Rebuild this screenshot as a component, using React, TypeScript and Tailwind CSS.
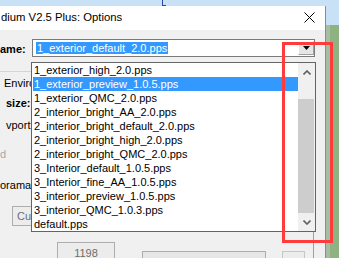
const files = [
  '1_exterior_high_2.0.pps',
  '1_exterior_preview_1.0.5.pps',
  '1_exterior_QMC_2.0.pps',
  '2_interior_bright_AA_2.0.pps',
  '2_interior_bright_default_2.0.pps',
  '2_interior_bright_high_2.0.pps',
  '2_interior_bright_QMC_2.0.pps',
  '3_Interior_default_1.0.5.pps',
  '3_Interior_fine_AA_1.0.5.pps',
  '3_interior_preview_1.0.5.pps',
  '3_interior_QMC_1.0.3.pps',
  'default.pps',
]

function Chevron({ up }: { up?: boolean }) {
  return (
    <svg width="8" height="5" viewBox="0 0 8 5">
      <polyline
        points={up ? '0.5,4.5 4,1 7.5,4.5' : '0.5,0.5 4,4 7.5,0.5'}
        fill="none"
        stroke="#606060"
        strokeWidth="1.6"
      />
    </svg>
  )
}

export default function App() {
  return (
    <div className="relative w-[339px] h-[258px] overflow-hidden flex bg-[#8fb282] font-['Liberation_Sans',Arial,sans-serif] text-[11px] text-black">
      {/* dialog column */}
      <div className="w-[326px] flex flex-col">
        <div className="h-[7px] bg-[#c9e1f6] flex">
          <div className="ml-[162px] w-[4px] h-[6px] border-l border-b border-[#2a49a8]" />
        </div>
        <div className="flex-1 flex flex-col border-r border-[#6f8fc0]">
          {/* title bar */}
          <div className="h-[24px] bg-white flex items-center">
            <span className="pl-[1px] text-[11.3px] leading-[14px] mt-[-2px]">dium V2.5 Plus: Options</span>
            <svg className="ml-auto mr-[10px] mt-[-2px]" width="11" height="11" viewBox="0 0 11 11">
              <path d="M0.5 0.5 L10.5 10.5 M10.5 0.5 L0.5 10.5" stroke="#000" strokeWidth="1" />
            </svg>
          </div>

          {/* body */}
          <div className="flex-1 bg-[#f0f0f0] flex flex-col">
            <div className="mt-[9px] flex items-center h-[18px]">
              <span className="w-[32px] font-bold leading-[14px] mt-[2px]">ame:</span>
              <div className="w-[283px] h-[18px] border border-[#7a7a7a] bg-white flex items-start">
                <span className="ml-[3px] mt-[2px] h-[12px] px-[1px] bg-[#3399ff] text-white leading-[12px]">
                  1_exterior_default_2.0.pps
                </span>
                <div className="ml-auto mt-[1px] w-[16px] h-[14px] bg-[#e5e5e5] border-t border-l border-white border-b border-r border-b-[#a0a0a0] border-r-[#a0a0a0] flex items-center justify-center">
                  <svg width="7" height="4" viewBox="0 0 7 4">
                    <polygon points="0,0 7,0 3.5,4" fill="#000" />
                  </svg>
                </div>
              </div>
            </div>

            <div className="mt-[14px] w-[40px] h-px bg-[#d5d5d5]" />
            <div className="mt-[4px] pl-[4px] leading-[14px]">Enviro</div>
            <div className="mt-[6px] pl-[6px] leading-[14px] font-bold">size:</div>
            <div className="mt-[8px] pl-[6px] leading-[14px]">vport</div>
            <div className="mt-[15px] pl-[0px] leading-[14px] text-[#a8a8a8]">d</div>
            <div className="mt-[17px] leading-[14px]">orama</div>
            <div className="mt-[14px] ml-[12px] w-[60px] h-[20px] border border-[#adadad] bg-[#ececec] flex items-center pl-[4px] text-[#6d6d6d]">
              Cu
            </div>
            <div className="mt-[16px] flex items-start">
              <div className="ml-[57px] w-[58px] h-[21px] border border-[#adadad] bg-[#ececec] flex items-center justify-center text-[#6d6d6d] pt-[1px]">
                1198
              </div>
              <div className="ml-[27px] mt-[9px] w-[124px] h-[12px] border border-[#adadad] bg-[#e6e6e6]" />
              <div className="ml-[16px] mt-[9px] w-[23px] h-[12px] border border-[#c6c6c6] bg-[#ececec]" />
              <div className="ml-[8px] -mt-[11px] w-px h-[30px] bg-[#a0a0a0]" />
            </div>
          </div>
        </div>
      </div>

      {/* desktop strip on the right */}
      <div className="flex-1 flex flex-col">
        <div className="h-[25px] bg-[#c9e1f6]" />
        <div className="flex-1 flex">
          <div className="w-[4px] bg-[#a7bda3]" />
          <div className="flex-1 bg-[#8fb282]" />
        </div>
      </div>

      {/* open dropdown list */}
      <div className="absolute left-[31px] top-[62px] w-[285px] h-[170px] border border-[#646464] bg-white flex">
        <div className="w-[266px] flex flex-col">
          {files.map((f, i) => (
            <div
              key={f}
              className={
                i === 1
                  ? 'ml-px h-[14px] leading-[14px] pl-[1px] whitespace-nowrap bg-[#3399ff] text-white'
                  : 'ml-px h-[14px] leading-[14px] pl-[1px] whitespace-nowrap'
              }
            >
              {f}
            </div>
          ))}
        </div>
        <div className="w-[17px] bg-[#f0f0f0] flex flex-col">
          <div className="h-[17px] flex items-center justify-center pt-[2px]">
            <Chevron up />
          </div>
          <div className="h-[19px]" />
          <div className="h-[114px] mr-px bg-[#cdcdcd]" />
          <div className="h-px" />
          <div className="h-[17px] flex items-center justify-center">
            <Chevron />
          </div>
        </div>
      </div>

      {/* red annotation box */}
      <div className="absolute left-[282px] top-[42px] w-[51px] h-[201px] border-[3px] border-[#ff3b3b]" />
    </div>
  )
}
